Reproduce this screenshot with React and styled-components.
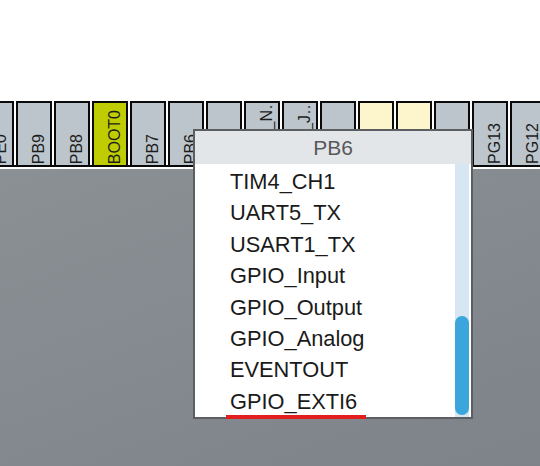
import React from "react";
import styled, { createGlobalStyle } from "styled-components";

const pins = [
  { label: "PE0" },
  { label: "PB9" },
  { label: "PB8" },
  { label: "BOOT0", kind: "boot" },
  { label: "PB7" },
  { label: "PB6" },
  { label: "VDD" },
  { label: "PDR_N…" },
  { label: "VSS_J…" },
  { label: "PB5" },
  { label: "VDD", kind: "power" },
  { label: "VSS", kind: "power" },
  { label: "PB4" },
  { label: "PG13" },
  { label: "PG12" },
];

const signals = [
  "TIM4_CH1",
  "UART5_TX",
  "USART1_TX",
  "GPIO_Input",
  "GPIO_Output",
  "GPIO_Analog",
  "EVENTOUT",
  "GPIO_EXTI6",
];

const GlobalStyle = createGlobalStyle`
  html, body {
    margin: 0;
    padding: 0;
    width: 540px;
    height: 466px;
    overflow: hidden;
    background: #ffffff;
    font-family: "Liberation Sans", Arial, sans-serif;
  }
`;

const App = () => {
  return (
    <>
      <GlobalStyle />
      <Page>
        <TopSpace />
        <PinRow>
          {pins.map((p, i) => (
            <Pin key={i} kind={p.kind}>
              <PinLabel>{p.label}</PinLabel>
            </Pin>
          ))}
        </PinRow>
        <Edge />
        <ChipBody />
        <Popup>
          <PopupHeader>PB6</PopupHeader>
          <PopupBody>
            <SignalList>
              {signals.map((s) => (
                <Signal key={s}>{s}</Signal>
              ))}
            </SignalList>
            <ScrollTrack>
              <ScrollThumb />
            </ScrollTrack>
          </PopupBody>
          <RedMark />
        </Popup>
      </Page>
    </>
  );
};

const Page = styled.div`
  position: relative;
  width: 540px;
  height: 466px;
  display: flex;
  flex-direction: column;
  overflow: hidden;
`;

const TopSpace = styled.div`
  height: 101px;
  flex-shrink: 0;
`;

const PinRow = styled.div`
  display: flex;
  gap: 2px;
  margin-left: -22px;
  height: 64px;
  flex-shrink: 0;
`;

const Pin = styled.div`
  width: 32px;
  flex-shrink: 0;
  border: 2px solid #0a0a0a;
  border-bottom: none;
  background: ${(p) =>
    p.kind === "boot" ? "#bfcc00" : p.kind === "power" ? "#fdf5cc" : "#bcc5cb"};
  display: flex;
  align-items: flex-end;
  justify-content: center;
  overflow: hidden;
`;

const PinLabel = styled.div`
  writing-mode: vertical-rl;
  transform: rotate(180deg);
  font-size: 16px;
  color: #1c1c1c;
  padding-top: 1px;
  margin-left: 9px;
  white-space: nowrap;
`;

const Edge = styled.div`
  height: 2px;
  border-top: 2px solid #0a0a0a;
  background: #ffffff;
  flex-shrink: 0;
`;

const ChipBody = styled.div`
  flex: 1;
  background: linear-gradient(160deg, #8b9095 0%, #83898e 55%, #7d8388 100%);
`;

const Popup = styled.div`
  position: absolute;
  left: 193px;
  top: 129px;
  width: 276px;
  height: 286px;
  border: 2px solid #5b5f62;
  background: #ffffff;
  display: flex;
  flex-direction: column;
`;

const PopupHeader = styled.div`
  height: 33px;
  background: #e2e6e9;
  color: #585858;
  font-size: 21px;
  display: flex;
  align-items: center;
  justify-content: center;
  padding-top: 1px;
  box-sizing: border-box;
`;

const PopupBody = styled.div`
  flex: 1;
  display: flex;
  padding-right: 2px;
  min-height: 0;
`;

const SignalList = styled.div`
  flex: 1;
  padding: 2px 0 0 35px;
`;

const Signal = styled.div`
  font-size: 21.8px;
  line-height: 31.4px;
  color: #1a1a1a;
  white-space: nowrap;
`;

const ScrollTrack = styled.div`
  width: 14px;
  background: #d7e6f3;
  display: flex;
  flex-direction: column;
  justify-content: flex-end;
  padding-bottom: 2px;
`;

const ScrollThumb = styled.div`
  height: 99px;
  background: #3aa6dc;
  border-radius: 7px;
`;

const RedMark = styled.div`
  position: absolute;
  left: 31px;
  bottom: -2px;
  width: 140px;
  height: 4px;
  background: #e21e1e;
`;

export default App;
